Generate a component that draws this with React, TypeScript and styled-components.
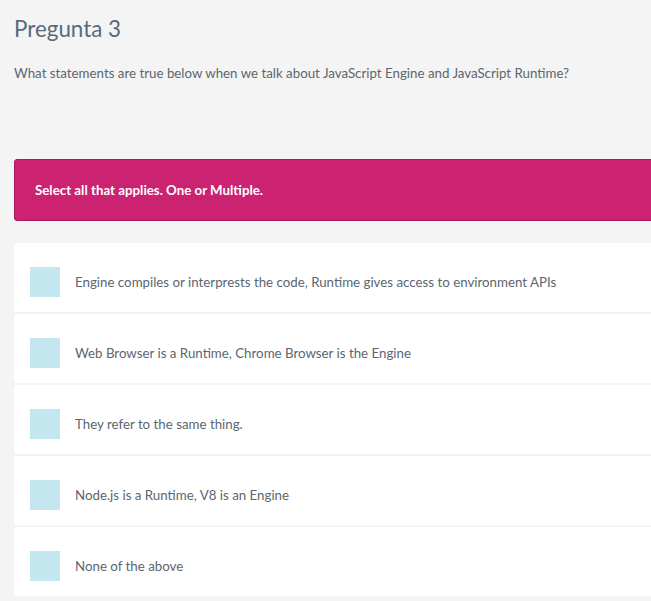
import React from "react";
import styled, { createGlobalStyle } from "styled-components";

const Global = createGlobalStyle`
  html, body { margin: 0; padding: 0; background: #f4f4f4; overflow: hidden; }
  body { font-family: Lato, "Noto Sans", sans-serif; }
`;

const Page = styled.div`
  width: 700px;
  padding: 14px 0 0 14px;
  box-sizing: border-box;
`;

const Title = styled.h1`
  margin: 0;
  font-size: 22.4px;
  font-weight: 400;
  line-height: 30px;
  color: #586a7c;
`;

const Question = styled.p`
  margin: 20px 0 0;
  font-size: 13.3px;
  line-height: 18px;
  color: #5b6670;
`;

const Banner = styled.div`
  margin-top: 77px;
  height: 62px;
  box-sizing: border-box;
  background: #cc2272;
  border: 1px solid #a81a5d;
  border-radius: 3px;
  display: flex;
  align-items: center;
  padding-left: 20px;
  color: #fff;
  font-size: 13.3px;
  font-weight: 700;
`;

const Options = styled.div`
  margin-top: 22px;
  display: flex;
  flex-direction: column;
  gap: 2px;
`;

const Option = styled.label`
  height: 69px;
  box-sizing: border-box;
  padding-top: 8px;
  background: #fff;
  border-radius: 3px;
  display: flex;
  align-items: center;
  padding-left: 16px;
  gap: 15px;
  font-size: 13.3px;
  color: #5b6670;
`;

const Box = styled.span`
  width: 30px;
  height: 30px;
  background: #c4e6ef;
  flex: none;
`;

const items = [
  "Engine compiles or interprests the code, Runtime gives access to environment APIs",
  "Web Browser is a Runtime, Chrome Browser is the Engine",
  "They refer to the same thing.",
  "Node.js is a Runtime, V8 is an Engine",
  "None of the above",
];

export default function App() {
  return (
    <Page>
      <Global />
      <Title>Pregunta 3</Title>
      <Question>
        What statements are true below when we talk about JavaScript Engine and JavaScript Runtime?
      </Question>
      <Banner>Select all that applies. One or Multiple.</Banner>
      <Options>
        {items.map((t) => (
          <Option key={t}>
            <Box />
            {t}
          </Option>
        ))}
      </Options>
    </Page>
  );
}
